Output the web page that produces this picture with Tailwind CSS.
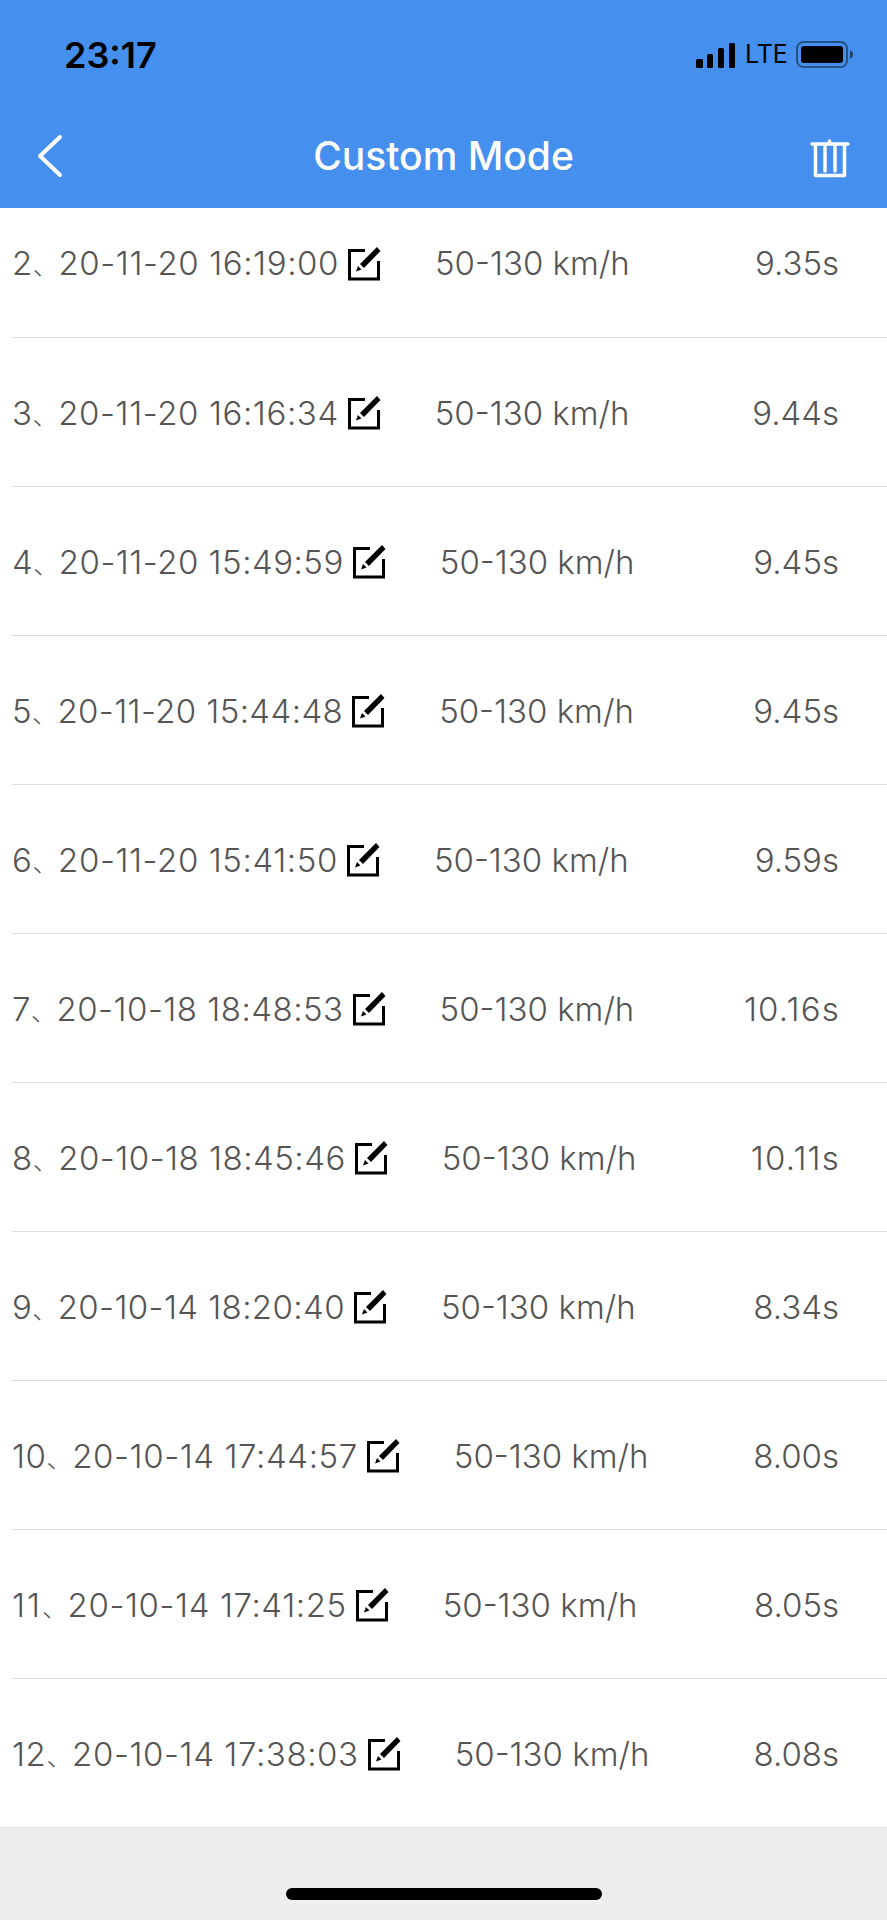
<!DOCTYPE html>
<html><head><meta charset="utf-8"><script src="https://cdn.jsdelivr.net/npm/@tailwindcss/browser@4"></script></head>
<body class="m-0 bg-white">
<div class="w-[887px] h-[1920px] flex flex-col overflow-hidden font-['Inter','Noto_Sans_CJK_SC',sans-serif]">
  <header class="h-[208px] bg-[#4590ee] shrink-0 flex flex-col">
    <div class="h-[112px] flex items-center pl-[64px] pr-[33px] pb-[3px] justify-between">
      <span class="font-semibold text-[36px] leading-none text-black">23:17</span>
      <div class="flex items-center">
        <svg class="-ml-[2px]" width="40" height="26" viewBox="0 0 40 26" fill="#000"><rect x="1" y="17" width="7" height="9" rx="1.5"/><rect x="12" y="12" width="6" height="14" rx="1.5"/><rect x="23" y="6" width="6" height="20" rx="1.5"/><rect x="34" y="1" width="6" height="25" rx="1.5"/></svg>
        <span class="ml-[10px] text-[25px] leading-none text-black w-[41px]">LTE</span>
        <svg class="ml-[10px]" width="58" height="27" viewBox="0 0 58 27"><rect x="1" y="1" width="50" height="25" rx="6.5" fill="none" stroke="#000" stroke-opacity=".45" stroke-width="2"/><rect x="5" y="5" width="42" height="17" rx="3" fill="#000"/><path d="M54 9c2 1 3 3 3 4.500s-1 3.500-3 4.500z" fill="#000" fill-opacity=".55"/></svg>
      </div>
    </div>
    <div class="relative h-[96px] flex items-center justify-center pb-[9px]">
      <svg class="absolute left-[35px] top-[22px]" width="30" height="44" viewBox="0 0 30 44" fill="none" stroke="#fff" stroke-width="4" stroke-linecap="round" stroke-linejoin="round"><path d="M25 3 5 22 25 41"/></svg>
      <span class="font-[550] text-[39px] leading-none text-white">Custom Mode</span>
      <svg class="absolute left-[810px] top-[25px]" width="40" height="44" viewBox="0 0 40 44" fill="none" stroke="#fff" stroke-width="3.500" stroke-linecap="round" stroke-linejoin="round"><path d="M2 7H38M19.500 4V7M5.500 8V38.500H34.500V8M15 10V34M25 10V34"/></svg>
    </div>
  </header>
  <main class="flex-1 flex flex-col text-[#555] text-[33px] font-light leading-none">
    <div class="h-[130px] pb-[18px] ml-[12px] pr-[48px] flex items-center border-b border-[#ddd]"><span class="tracking-[0.6px]">2<span class="text-[25px]">、</span>20-11-20 16:19:00</span><svg class="ml-[8px] shrink-0" width="34" height="35" viewBox="0 0 34 35"><path d="M18 4.500H2.500V33H31.500V15" fill="none" stroke="#000" stroke-width="3"/><path d="M13 18 30 1 33.500 5 17 22zM9 25.500 11 20 14.500 23.500z" fill="#000"/></svg><span class="ml-[54px]">50-130 km/h</span><span class="ml-auto">9.35s</span></div>
    <div class="h-[149px] ml-[12px] pr-[48px] flex items-center border-b border-[#ddd]"><span class="mt-[2px] tracking-[0.6px]">3<span class="text-[25px]">、</span>20-11-20 16:16:34</span><svg class="ml-[8px] shrink-0" width="34" height="35" viewBox="0 0 34 35"><path d="M18 4.500H2.500V33H31.500V15" fill="none" stroke="#000" stroke-width="3"/><path d="M13 18 30 1 33.500 5 17 22zM9 25.500 11 20 14.500 23.500z" fill="#000"/></svg><span class="ml-[54px] mt-[2px]">50-130 km/h</span><span class="ml-auto mt-[2px]">9.44s</span></div>
    <div class="h-[149px] ml-[12px] pr-[48px] flex items-center border-b border-[#ddd]"><span class="mt-[2px] tracking-[0.5px]">4<span class="text-[25px]">、</span>20-11-20 15:49:59</span><svg class="ml-[8px] shrink-0" width="34" height="35" viewBox="0 0 34 35"><path d="M18 4.500H2.500V33H31.500V15" fill="none" stroke="#000" stroke-width="3"/><path d="M13 18 30 1 33.500 5 17 22zM9 25.500 11 20 14.500 23.500z" fill="#000"/></svg><span class="ml-[54px] mt-[2px]">50-130 km/h</span><span class="ml-auto mt-[2px]">9.45s</span></div>
    <div class="h-[149px] ml-[12px] pr-[48px] flex items-center border-b border-[#ddd]"><span class="mt-[2px] tracking-[0.4px]">5<span class="text-[25px]">、</span>20-11-20 15:44:48</span><svg class="ml-[8px] shrink-0" width="34" height="35" viewBox="0 0 34 35"><path d="M18 4.500H2.500V33H31.500V15" fill="none" stroke="#000" stroke-width="3"/><path d="M13 18 30 1 33.500 5 17 22zM9 25.500 11 20 14.500 23.500z" fill="#000"/></svg><span class="ml-[54px] mt-[2px]">50-130 km/h</span><span class="ml-auto mt-[2px]">9.45s</span></div>
    <div class="h-[149px] ml-[12px] pr-[48px] flex items-center border-b border-[#ddd]"><span class="mt-[2px] tracking-[0.6px]">6<span class="text-[25px]">、</span>20-11-20 15:41:50</span><svg class="ml-[8px] shrink-0" width="34" height="35" viewBox="0 0 34 35"><path d="M18 4.500H2.500V33H31.500V15" fill="none" stroke="#000" stroke-width="3"/><path d="M13 18 30 1 33.500 5 17 22zM9 25.500 11 20 14.500 23.500z" fill="#000"/></svg><span class="ml-[54px] mt-[2px]">50-130 km/h</span><span class="ml-auto mt-[2px]">9.59s</span></div>
    <div class="h-[149px] ml-[12px] pr-[48px] flex items-center border-b border-[#ddd]"><span class="mt-[2px] tracking-[0.5px]">7<span class="text-[25px]">、</span>20-10-18 18:48:53</span><svg class="ml-[8px] shrink-0" width="34" height="35" viewBox="0 0 34 35"><path d="M18 4.500H2.500V33H31.500V15" fill="none" stroke="#000" stroke-width="3"/><path d="M13 18 30 1 33.500 5 17 22zM9 25.500 11 20 14.500 23.500z" fill="#000"/></svg><span class="ml-[54px] mt-[2px]">50-130 km/h</span><span class="ml-auto mt-[2px] tracking-[1.2px] -mr-[1px]">10.16s</span></div>
    <div class="h-[149px] ml-[12px] pr-[48px] flex items-center border-b border-[#ddd]"><span class="mt-[2px] tracking-[0.5px]">8<span class="text-[25px]">、</span>20-10-18 18:45:46</span><svg class="ml-[8px] shrink-0" width="34" height="35" viewBox="0 0 34 35"><path d="M18 4.500H2.500V33H31.500V15" fill="none" stroke="#000" stroke-width="3"/><path d="M13 18 30 1 33.500 5 17 22zM9 25.500 11 20 14.500 23.500z" fill="#000"/></svg><span class="ml-[54px] mt-[2px]">50-130 km/h</span><span class="ml-auto mt-[2px] tracking-[1.2px] -mr-[1px]">10.11s</span></div>
    <div class="h-[149px] ml-[12px] pr-[48px] flex items-center border-b border-[#ddd]"><span class="mt-[2px] tracking-[0.4px]">9<span class="text-[25px]">、</span>20-10-14 18:20:40</span><svg class="ml-[8px] shrink-0" width="34" height="35" viewBox="0 0 34 35"><path d="M18 4.500H2.500V33H31.500V15" fill="none" stroke="#000" stroke-width="3"/><path d="M13 18 30 1 33.500 5 17 22zM9 25.500 11 20 14.500 23.500z" fill="#000"/></svg><span class="ml-[54px] mt-[2px]">50-130 km/h</span><span class="ml-auto mt-[2px]">8.34s</span></div>
    <div class="h-[149px] ml-[12px] pr-[48px] flex items-center border-b border-[#ddd]"><span class="mt-[2px] tracking-[0.6px]">10<span class="text-[25px]">、</span>20-10-14 17:44:57</span><svg class="ml-[8px] shrink-0" width="34" height="35" viewBox="0 0 34 35"><path d="M18 4.500H2.500V33H31.500V15" fill="none" stroke="#000" stroke-width="3"/><path d="M13 18 30 1 33.500 5 17 22zM9 25.500 11 20 14.500 23.500z" fill="#000"/></svg><span class="ml-[54px] mt-[2px]">50-130 km/h</span><span class="ml-auto mt-[2px]">8.00s</span></div>
    <div class="h-[149px] ml-[12px] pr-[48px] flex items-center border-b border-[#ddd]"><span class="mt-[2px] tracking-[0.6px]"><span class="tracking-[2px]">11</span><span class="text-[25px]">、</span>20-10-14 17:41:25</span><svg class="ml-[8px] shrink-0" width="34" height="35" viewBox="0 0 34 35"><path d="M18 4.500H2.500V33H31.500V15" fill="none" stroke="#000" stroke-width="3"/><path d="M13 18 30 1 33.500 5 17 22zM9 25.500 11 20 14.500 23.500z" fill="#000"/></svg><span class="ml-[54px] mt-[2px]">50-130 km/h</span><span class="ml-auto mt-[2px]">8.05s</span></div>
    <div class="h-[149px] pl-[12px] pr-[48px] flex items-center border-b border-[#ddd]"><span class="mt-[2px] tracking-[0.6px]">12<span class="text-[25px]">、</span>20-10-14 17:38:03</span><svg class="ml-[8px] shrink-0" width="34" height="35" viewBox="0 0 34 35"><path d="M18 4.500H2.500V33H31.500V15" fill="none" stroke="#000" stroke-width="3"/><path d="M13 18 30 1 33.500 5 17 22zM9 25.500 11 20 14.500 23.500z" fill="#000"/></svg><span class="ml-[54px] mt-[2px]">50-130 km/h</span><span class="ml-auto mt-[2px]">8.08s</span></div>
    <footer class="flex-1 bg-[#eee] flex justify-center items-end pb-[20px]"><div class="w-[316px] h-[12px] rounded-full bg-black"></div></footer>
  </main>
</div>
</body></html>
